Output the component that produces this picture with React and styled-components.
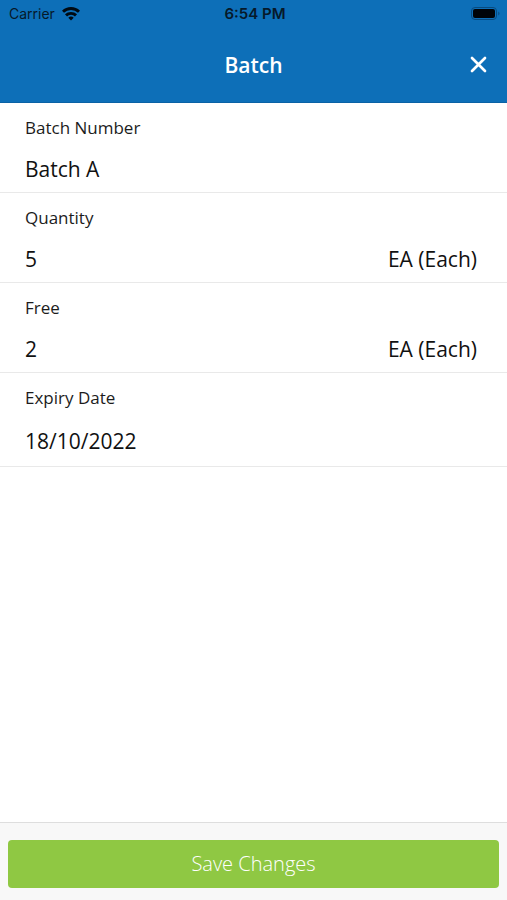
import React, { useState } from "react";
import styled, { createGlobalStyle } from "styled-components";

const GlobalStyle = createGlobalStyle`
  * { box-sizing: border-box; }
  body {
    margin: 0;
    background: #ffffff;
    color: #1c1c1c;
    font-family: "Open Sans", "Noto Sans", sans-serif;
  }
`;

const Screen = styled.div`
  display: flex;
  flex-direction: column;
  min-height: 100vh;
`;

const Header = styled.header`
  background: #0d6fb8;
  border-bottom: 1px solid #0a62a5;
`;

const StatusBar = styled.div`
  display: grid;
  grid-template-columns: 1fr auto 1fr;
  align-items: center;
  height: 27px;
  padding: 0 6px 0 9px;
  color: #06192a;
  font-family: Inter, "Liberation Sans", sans-serif;
  font-size: 14px;
  line-height: 20px;
`;

const Carrier = styled.div`
  display: flex;
  align-items: center;
  gap: 7px;
`;

const Clock = styled.div`
  font-size: 15px;
  font-weight: 600;
`;

const BatteryIcon = styled.svg`
  justify-self: end;
`;

const TitleBar = styled.div`
  display: grid;
  grid-template-columns: 1fr auto 1fr;
  align-items: center;
  height: 75px;
  padding: 0 16px;
`;

const Title = styled.h1`
  grid-column: 2;
  margin: 0;
  color: #ffffff;
  font-size: 21px;
  font-weight: 600;
  line-height: 28px;
`;

const CloseButton = styled.button`
  display: flex;
  justify-self: end;
  padding: 4px;
  border: 0;
  background: none;
  color: #ffffff;
  cursor: pointer;
`;

const Form = styled.form`
  display: flex;
  flex: 1;
  flex-direction: column;
`;

const Fields = styled.div`
  flex: 1;
`;

const Field = styled.div`
  padding: 13px 30px ${({ $roomy }) => ($roomy ? 10 : 8)}px 25px;
  border-bottom: 1px solid #e9e9e9;
`;

const Label = styled.label`
  display: block;
  font-size: 17px;
  line-height: 24px;
`;

const ValueRow = styled.div`
  display: flex;
  align-items: center;
  gap: 16px;
  margin-top: ${({ $roomy }) => ($roomy ? 16 : 14)}px;
  font-size: 21px;
  line-height: 30px;
  color: #111111;
`;

const ValueInput = styled.input`
  flex: 1;
  min-width: 0;
  height: 30px;
  padding: 0;
  border: 0;
  outline: 0;
  background: none;
  color: inherit;
  font: inherit;
`;

const Unit = styled.span`
  white-space: nowrap;
`;

const Footer = styled.footer`
  padding: 17px 8px 12px;
  border-top: 1px solid #dedede;
  background: #f8f8f8;
`;

const SaveButton = styled.button`
  display: block;
  width: 100%;
  height: 48px;
  padding: 0;
  border: 0;
  border-radius: 4px;
  background: #8fc843;
  color: #ffffff;
  font-family: inherit;
  font-size: 20px;
  font-weight: 300;
  line-height: 28px;
  cursor: pointer;
`;

const FIELDS = [
  { id: "batch", label: "Batch Number", value: "Batch A" },
  { id: "quantity", label: "Quantity", value: "5", unit: "EA (Each)" },
  { id: "free", label: "Free", value: "2", unit: "EA (Each)" },
  { id: "expiry", label: "Expiry Date", value: "18/10/2022", roomy: true },
];

function WifiIcon() {
  return (
    <svg width="18" height="14" viewBox="0 0 18 14" fill="none" stroke="#000a12" strokeWidth="2.9" aria-hidden="true">
      <path d="M1 4.8a11.3 11.3 0 0 1 16 0" />
      <path d="M4 8.4a7.1 7.1 0 0 1 10 0" />
      <path d="M9 13.5 6.3 10.8a3.8 3.8 0 0 1 5.4 0Z" fill="#000a12" stroke="none" />
    </svg>
  );
}

function Battery() {
  return (
    <BatteryIcon width="30" height="14" viewBox="0 0 30 14" aria-hidden="true">
      <rect x="0.5" y="0.5" width="25" height="12" rx="3.5" fill="none" stroke="#084b7f" />
      <rect x="2" y="2" width="22" height="9" rx="2" fill="#000408" />
      <path d="M27.3 4.5a2.3 2.3 0 0 1 0 4Z" fill="#084b7f" />
    </BatteryIcon>
  );
}

export default function App() {
  const [values, setValues] = useState(() =>
    Object.fromEntries(FIELDS.map(({ id, value }) => [id, value]))
  );

  return (
    <Screen>
      <GlobalStyle />
      <Header>
        <StatusBar>
          <Carrier>
            Carrier
            <WifiIcon />
          </Carrier>
          <Clock>6:54 PM</Clock>
          <Battery />
        </StatusBar>
        <TitleBar>
          <Title>Batch</Title>
          <CloseButton type="button" aria-label="Close">
            <svg width="17" height="17" viewBox="0 0 17 17" fill="none" stroke="currentColor" strokeWidth="2.7" strokeLinecap="round" aria-hidden="true">
              <path d="M2 2l13 13M15 2 2 15" />
            </svg>
          </CloseButton>
        </TitleBar>
      </Header>
      <Form onSubmit={(event) => event.preventDefault()}>
        <Fields>
          {FIELDS.map(({ id, label, unit, roomy }) => (
            <Field key={id} $roomy={roomy}>
              <Label htmlFor={id}>{label}</Label>
              <ValueRow $roomy={roomy}>
                <ValueInput
                  id={id}
                  value={values[id]}
                  onChange={(event) => setValues({ ...values, [id]: event.target.value })}
                />
                {unit && <Unit>{unit}</Unit>}
              </ValueRow>
            </Field>
          ))}
        </Fields>
        <Footer>
          <SaveButton type="submit">Save Changes</SaveButton>
        </Footer>
      </Form>
    </Screen>
  );
}
